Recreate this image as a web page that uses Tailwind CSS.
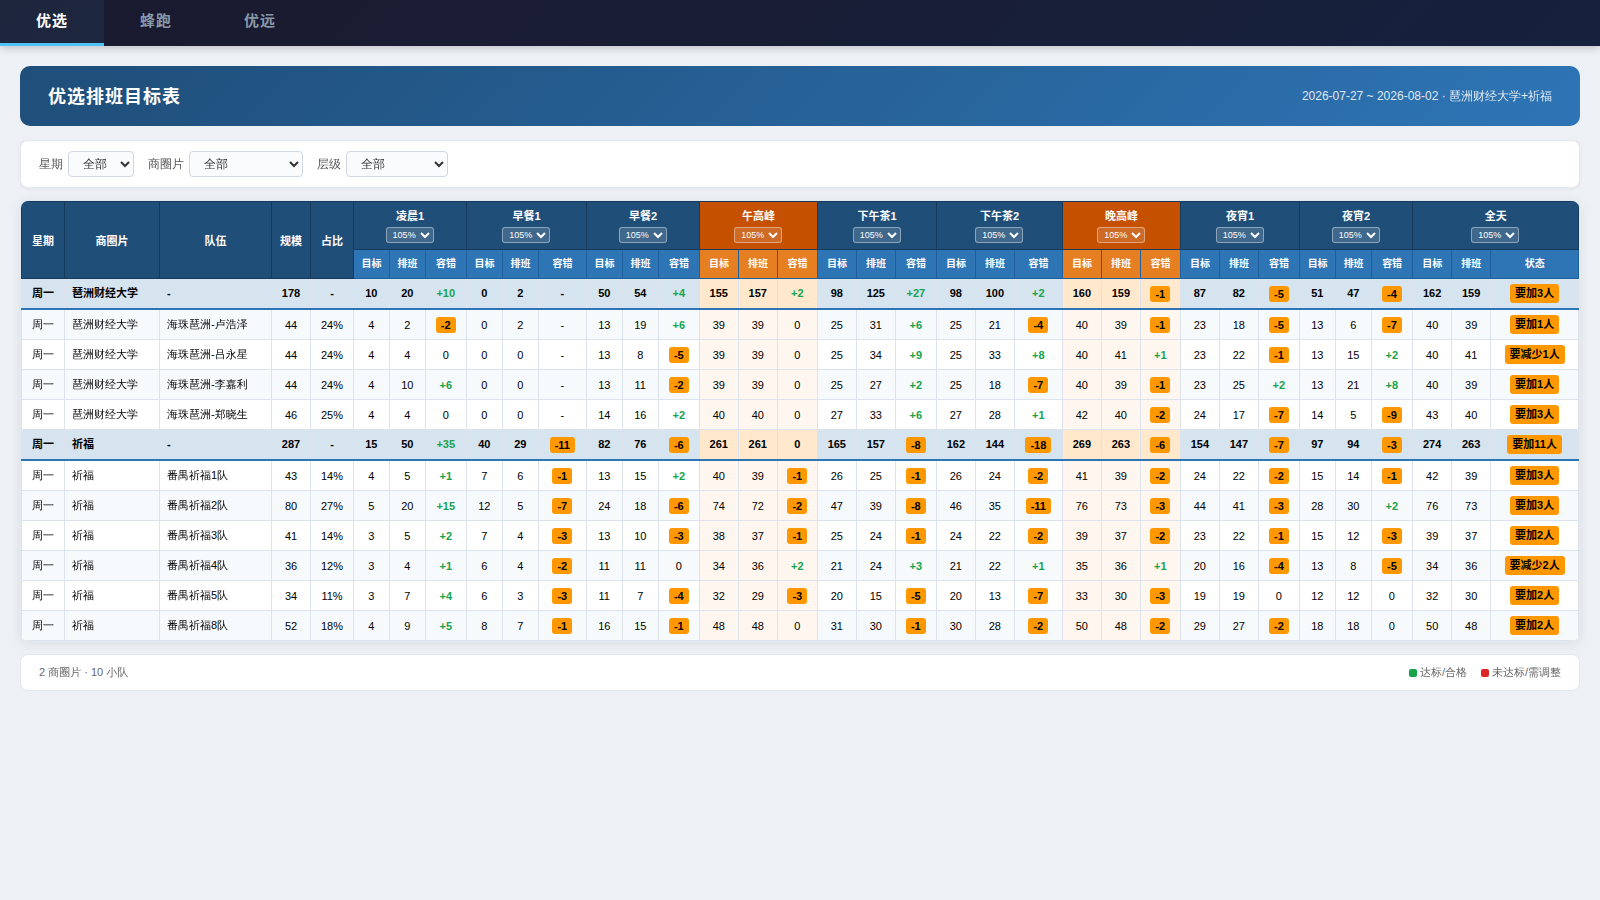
<!DOCTYPE html>
<html lang="zh-CN">
<head>
  <meta charset="UTF-8" />
  <meta name="viewport" content="width=device-width, initial-scale=1.0" />
  <title>优选排班目标表</title>
  <script src="https://cdn.jsdelivr.net/npm/@tailwindcss/browser@4"></script>
</head>
<body class="min-h-screen bg-[#edf0f5] font-['Liberation_Sans','WenQuanYi_Zen_Hei','Noto_Sans_CJK_SC',sans-serif] text-black">
  <nav class="flex h-[46px] bg-linear-135 from-[#1a1a2e] to-[#16213e] font-['Liberation_Sans','Noto_Sans_CJK_SC',sans-serif] shadow-[0_2px_8px_rgba(0,0,0,0.2)]">
    <button class="w-[104px] border-b-3 border-[#4fc3f7] bg-[#4fc3f7]/8 pb-px text-[15px] font-bold tracking-[1px] text-white">优选</button>
    <button class="w-[104px] border-b-3 border-transparent pb-px text-[15px] font-bold tracking-[1px] text-[#8899aa]">蜂跑</button>
    <button class="w-[104px] border-b-3 border-transparent pb-px text-[15px] font-bold tracking-[1px] text-[#8899aa]">优远</button>
  </nav>

  <main class="p-5">
    <header class="mb-[14px] flex h-[60px] items-center justify-between rounded-[10px] bg-linear-135 from-[#1f4e79] to-[#2e75b6] px-7 text-white">
      <h1 class="pt-[2px] font-['Liberation_Sans','Noto_Sans_CJK_SC',sans-serif] text-[18px] font-bold tracking-[1px]">优选排班目标表</h1>
      <div class="text-xs opacity-85">2026-07-27 ~ 2026-08-02 · 琶洲财经大学+祈福</div>
    </header>

    <div class="mb-3 flex h-12 items-center gap-[14px] rounded-lg border border-[#e2e8f0] bg-white px-[18px] text-xs text-[#555] shadow-[0_1px_4px_rgba(0,0,0,0.05)]">
      <label class="flex items-center gap-[5px]">星期
        <select class="h-[26px] w-[66px] rounded border border-[#d0d7e5] bg-[#fafbfd] px-[10px] text-[#333]"><option>全部</option><option>周一</option></select>
      </label>
      <label class="flex items-center gap-[5px]">商圈片
        <select class="h-[26px] w-[114px] rounded border border-[#d0d7e5] bg-[#fafbfd] px-[10px] text-[#333]"><option>全部</option><option>琶洲财经大学</option><option>祈福</option></select>
      </label>
      <label class="flex items-center gap-[5px]">层级
        <select class="h-[26px] w-[102px] rounded border border-[#d0d7e5] bg-[#fafbfd] px-[10px] text-[#333]"><option>全部</option><option>商圈片</option><option>小队</option></select>
      </label>
    </div>

    <div class="mb-3 overflow-hidden rounded-lg border border-[#e2e8f0] bg-white shadow-[0_2px_12px_rgba(0,0,0,0.08)]">
      <table class="w-[1558px] table-fixed border-collapse text-center text-[11px] leading-[normal]">
        <colgroup id="cols"></colgroup>
        <thead class="font-['Liberation_Sans','Noto_Sans_CJK_SC',sans-serif] text-white">
          <tr id="group-row" class="h-12"></tr>
          <tr id="sub-row" class="h-[29px]"></tr>
        </thead>
        <tbody id="rows"></tbody>
      </table>
    </div>

    <footer class="flex h-[37px] items-center justify-between rounded-lg border border-[#e2e8f0] bg-white px-[18px] text-[11px] text-[#666]">
      <span>2 商圈片 · 10 小队</span>
      <div class="flex gap-[14px]">
        <span class="flex items-center gap-[3px]"><i class="size-2 rounded-xs bg-[#16a34a]"></i>达标/合格</span>
        <span class="flex items-center gap-[3px]"><i class="size-2 rounded-xs bg-[#dc2626]"></i>未达标/需调整</span>
      </div>
    </footer>
  </main>

<script>
const widths = [43, 95, 112, 39, 43, 36, 36, 41, 36, 36, 48, 36, 36, 41, 39, 39, 40, 39, 39, 41, 39, 39, 48, 39, 39, 40, 39, 39, 41, 36, 36, 41, 39, 39, 88];
const periods = ["凌晨1", "早餐1", "早餐2", "午高峰", "下午茶1", "下午茶2", "晚高峰", "夜宵1", "夜宵2", "全天"];
const peaks = [3, 6];

// 商圈片 | 队伍 | 规模 | 占比 | 各时段 目标 排班 容错 | 全天 目标 排班 | 状态
const data = [
  "琶洲财经大学|-|178|-|10 20 +10 0 2 - 50 54 +4 155 157 +2 98 125 +27 98 100 +2 160 159 -1 87 82 -5 51 47 -4|162 159|要加3人",
  "琶洲财经大学|海珠琶洲-卢浩泽|44|24%|4 2 -2 0 2 - 13 19 +6 39 39 0 25 31 +6 25 21 -4 40 39 -1 23 18 -5 13 6 -7|40 39|要加1人",
  "琶洲财经大学|海珠琶洲-吕永星|44|24%|4 4 0 0 0 - 13 8 -5 39 39 0 25 34 +9 25 33 +8 40 41 +1 23 22 -1 13 15 +2|40 41|要减少1人",
  "琶洲财经大学|海珠琶洲-李嘉利|44|24%|4 10 +6 0 0 - 13 11 -2 39 39 0 25 27 +2 25 18 -7 40 39 -1 23 25 +2 13 21 +8|40 39|要加1人",
  "琶洲财经大学|海珠琶洲-郑晓生|46|25%|4 4 0 0 0 - 14 16 +2 40 40 0 27 33 +6 27 28 +1 42 40 -2 24 17 -7 14 5 -9|43 40|要加3人",
  "祈福|-|287|-|15 50 +35 40 29 -11 82 76 -6 261 261 0 165 157 -8 162 144 -18 269 263 -6 154 147 -7 97 94 -3|274 263|要加11人",
  "祈福|番禺祈福1队|43|14%|4 5 +1 7 6 -1 13 15 +2 40 39 -1 26 25 -1 26 24 -2 41 39 -2 24 22 -2 15 14 -1|42 39|要加3人",
  "祈福|番禺祈福2队|80|27%|5 20 +15 12 5 -7 24 18 -6 74 72 -2 47 39 -8 46 35 -11 76 73 -3 44 41 -3 28 30 +2|76 73|要加3人",
  "祈福|番禺祈福3队|41|14%|3 5 +2 7 4 -3 13 10 -3 38 37 -1 25 24 -1 24 22 -2 39 37 -2 23 22 -1 15 12 -3|39 37|要加2人",
  "祈福|番禺祈福4队|36|12%|3 4 +1 6 4 -2 11 11 0 34 36 +2 21 24 +3 21 22 +1 35 36 +1 20 16 -4 13 8 -5|34 36|要减少2人",
  "祈福|番禺祈福5队|34|11%|3 7 +4 6 3 -3 11 7 -4 32 29 -3 20 15 -5 20 13 -7 33 30 -3 19 19 0 12 12 0|32 30|要加2人",
  "祈福|番禺祈福8队|52|18%|4 9 +5 8 7 -1 16 15 -1 48 48 0 31 30 -1 30 28 -2 50 48 -2 29 27 -2 18 18 0|50 48|要加2人"
];

const byId = id => document.getElementById(id);

function badge(text, leading) {
  return `<span class="inline-block rounded-[3px] bg-[#ff9800] px-[5px] py-[2px] font-['Liberation_Sans','Noto_Sans_CJK_SC',sans-serif] font-bold text-black ${leading}">${text}</span>`;
}
function diff(v) {
  if (v[0] === "+") return `<span class="font-bold text-[#16a34a]">${v}</span>`;
  return v.length > 1 && v[0] === "-" ? badge(v, "leading-[12px]") : v;
}

function renderHead() {
  byId("cols").innerHTML = widths.map(w => `<col style="width:${w}px">`).join("");
  byId("group-row").innerHTML = ["星期", "商圈片", "队伍", "规模", "占比"].map(t =>
    `<th rowspan="2" class="border border-[#163a5c] bg-[#1f4e79] pt-px leading-4">${t}</th>`).join("") +
    periods.map((p, i) => `<th colspan="3" class="border border-[#163a5c] ${peaks.includes(i) ? "bg-[#c55000]" : "bg-[#1f4e79]"}">
      <div class="flex flex-col items-center gap-[3px] pb-px leading-4">${p}
        <select class="mr-[0.8px] h-4 w-12 rounded-[3px] border border-white/40 bg-white/15 pl-[2px] text-[9px] font-normal text-white"><option class="text-black">105%</option></select>
      </div></th>`).join("");
  byId("sub-row").innerHTML = periods.map((p, i) => ["目标", "排班", i === 9 ? "状态" : "容错"].map(t =>
    `<th class="border border-[#1f5f9e] text-[10px] leading-[14px] ${peaks.includes(i) ? "bg-[#e67e22]" : "bg-[#2e75b6]"}">${t}</th>`).join("")).join("");
}

function renderRows() {
  byId("rows").innerHTML = data.map((line, r) => {
    const [area, team, size, share, nums, day, status] = line.split("|");
    const sum = team === "-";
    const height = r === 1 || r === 6 ? "h-[31px]" : "h-[30px]";
    const cls = sum ? "bg-[#d6e4ef] font-['Liberation_Sans','Noto_Sans_CJK_SC',sans-serif] font-bold leading-[15px]" : r % 2 ? "bg-[#f7fafd]" : "bg-white";
    const edge = sum ? "border border-[#dce3ec] border-b-2 border-b-[#2e75b6]" : "border border-[#dce3ec]";
    const num = `${edge} ${sum || r === 1 || r === 6 ? "pt-px" : ""}`;
    const cells = nums.split(" ").map((v, i) => {
      const peak = peaks.includes(Math.floor(i / 3)) ? (sum ? "bg-[#ffe8cc]" : "bg-[#fff7ef]") : "";
      return `<td class="${num} pr-[0.5px] ${peak}">${i % 3 === 2 ? diff(v) : v}</td>`;
    }).join("");
    return `<tr class="${height} ${cls}"><td class="${edge}">周一</td>
      <td class="${edge} px-[7px] text-left">${area}</td><td class="${edge} px-[7px] text-left">${team}</td>
      <td class="${num}">${size}</td><td class="${num}">${share}</td>${cells}
      ${day.split(" ").map(v => `<td class="${num}">${v}</td>`).join("")}<td class="${edge}">${badge(status, "leading-[15px]")}</td></tr>`;
  }).join("");
}

renderHead();
renderRows();
</script>
</body>
</html>
